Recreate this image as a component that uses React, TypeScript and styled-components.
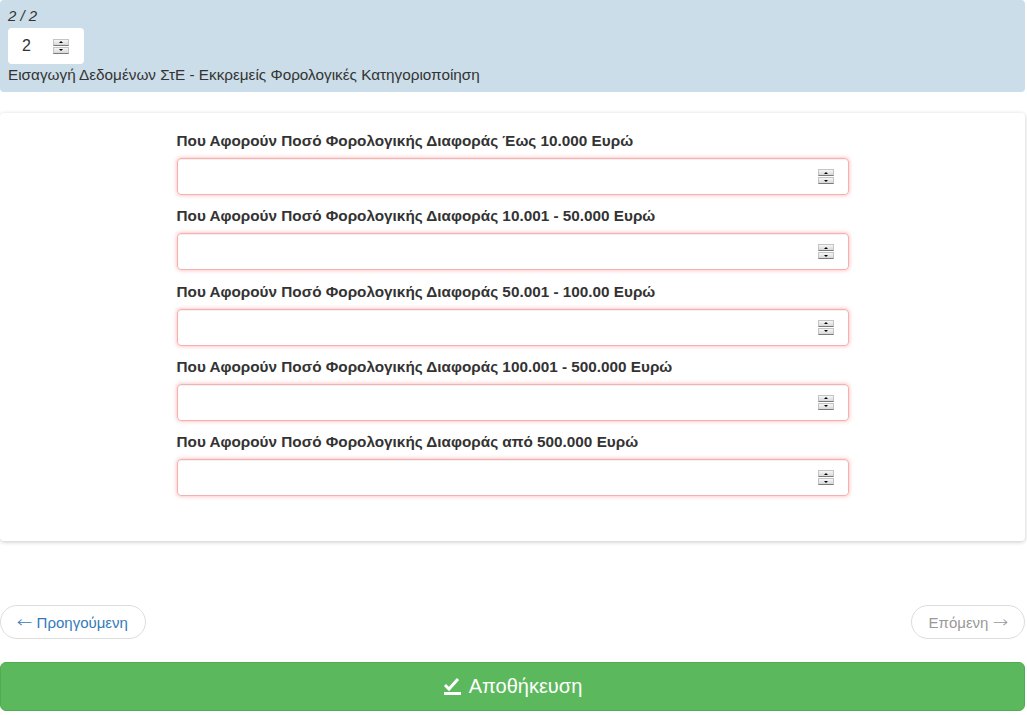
import React from 'react';
import styled, { createGlobalStyle } from 'styled-components';

const GlobalStyle = createGlobalStyle`
  html, body {
    margin: 0;
    padding: 0;
    background: #ffffff;
  }
  body {
    font-family: "Liberation Sans", Arial, Helvetica, sans-serif;
    font-size: 15px;
    color: #333333;
  }
`;

const Page = styled.div`
  width: 1025px;
  display: flex;
  flex-direction: column;
`;

const Header = styled.div`
  background: #cbdde8;
  border-radius: 4px;
  height: 92px;
  box-sizing: border-box;
  padding: 7px 8px 0;
  display: flex;
  flex-direction: column;
  align-items: flex-start;
`;

const PageCount = styled.div`
  font-style: italic;
  font-size: 15px;
  line-height: 18px;
  color: #333;
`;

const PageBox = styled.div`
  width: 76px;
  height: 36px;
  box-sizing: border-box;
  margin-top: 3px;
  background: #fff;
  border-radius: 4px;
  display: flex;
  align-items: center;
  padding-left: 14px;
  gap: 22px;
  font-size: 16px;
  color: #333;
`;

const Title = styled.div`
  margin-top: 2px;
  font-size: 15.3px;
  line-height: 18px;
  color: #333;
`;

const Card = styled.div`
  margin-top: 21px;
  background: #fff;
  border-radius: 4px;
  box-shadow: 0 1px 4px rgba(0, 0, 0, 0.22);
  padding: 18px 0 45px;
  display: flex;
  justify-content: center;
`;

const Fields = styled.div`
  width: 672px;
  display: flex;
  flex-direction: column;
  gap: 11.3px;
`;

const Field = styled.div`
  display: flex;
  flex-direction: column;
  gap: 7px;
`;

const Label = styled.label`
  font-weight: bold;
  font-size: 15.3px;
  line-height: 20px;
  color: #333;
`;

const InputWrap = styled.div`
  height: 37px;
  box-sizing: border-box;
  border: 1px solid #f5b0b0;
  border-radius: 4px;
  box-shadow: 0 0 4px rgba(255, 110, 110, 0.55), inset 0 1px 1px rgba(0, 0, 0, 0.06);
  display: flex;
  align-items: center;
  justify-content: flex-end;
  padding-right: 14px;
`;

const Spinner = styled.div`
  display: flex;
  flex-direction: column;
  width: 16px;
  gap: 1px;
`;

const SpinBtn = styled.div`
  height: 7px;
  background: linear-gradient(#f6f6f6, #d8d8d8);
  border: 1px solid #c4c4c4;
  border-bottom-color: #7a7a7a;
  box-sizing: border-box;
  display: flex;
  align-items: center;
  justify-content: center;
`;

const Arrow = styled.span<{ $down?: boolean }>`
  width: 0;
  height: 0;
  border-left: 2px solid transparent;
  border-right: 2px solid transparent;
  ${p => (p.$down ? 'border-top: 2px solid #000;' : 'border-bottom: 2px solid #000;')}
`;

const NumberSpinner: React.FC = () => (
  <Spinner>
    <SpinBtn><Arrow /></SpinBtn>
    <SpinBtn><Arrow $down /></SpinBtn>
  </Spinner>
);

const NavRow = styled.div`
  margin-top: 64px;
  display: flex;
  justify-content: space-between;
`;

const NavButton = styled.div<{ $disabled?: boolean }>`
  height: 34px;
  box-sizing: border-box;
  border: 1px solid #dddddd;
  border-radius: 17px;
  display: flex;
  align-items: center;
  gap: 6px;
  padding: 0 17px;
  font-size: 15px;
  color: ${p => (p.$disabled ? '#999999' : '#337ab7')};
  background: #fff;
`;

const NavArrow = styled.span`
  font-family: "DejaVu Sans", sans-serif;
  font-weight: 200;
  font-size: 15px;
  transform: scaleX(1.25);
`;

const SaveButton = styled.div`
  margin-top: 23px;
  height: 49px;
  background: #5cb85c;
  border: 1px solid #4cae4c;
  box-sizing: border-box;
  border-radius: 6px;
  display: flex;
  align-items: center;
  justify-content: center;
  gap: 7px;
  color: #fff;
  font-size: 20px;
`;

const fields = [
  'Που Αφορούν Ποσό Φορολογικής Διαφοράς Έως 10.000 Ευρώ',
  'Που Αφορούν Ποσό Φορολογικής Διαφοράς 10.001 - 50.000 Ευρώ',
  'Που Αφορούν Ποσό Φορολογικής Διαφοράς 50.001 - 100.00 Ευρώ',
  'Που Αφορούν Ποσό Φορολογικής Διαφοράς 100.001 - 500.000 Ευρώ',
  'Που Αφορούν Ποσό Φορολογικής Διαφοράς από 500.000 Ευρώ',
];

export default function App() {
  return (
    <>
      <GlobalStyle />
      <Page>
        <Header>
          <PageCount>2 / 2</PageCount>
          <PageBox>
            2
            <NumberSpinner />
          </PageBox>
          <Title>Εισαγωγή Δεδομένων ΣτΕ - Εκκρεμείς Φορολογικές Κατηγοριοποίηση</Title>
        </Header>
        <Card>
          <Fields>
            {fields.map(f => (
              <Field key={f}>
                <Label>{f}</Label>
                <InputWrap>
                  <NumberSpinner />
                </InputWrap>
              </Field>
            ))}
          </Fields>
        </Card>
        <NavRow>
          <NavButton><NavArrow>←</NavArrow>Προηγούμενη</NavButton>
          <NavButton $disabled>Επόμενη<NavArrow>→</NavArrow></NavButton>
        </NavRow>
        <SaveButton>
          <svg width="19" height="19" viewBox="0 0 19 19">
            <path d="M2 8 L6 12 L15 2" stroke="#fff" strokeWidth="3" fill="none" />
            <rect x="1" y="15" width="17" height="3" fill="#fff" />
          </svg>
          Αποθήκευση
        </SaveButton>
      </Page>
    </>
  );
}
